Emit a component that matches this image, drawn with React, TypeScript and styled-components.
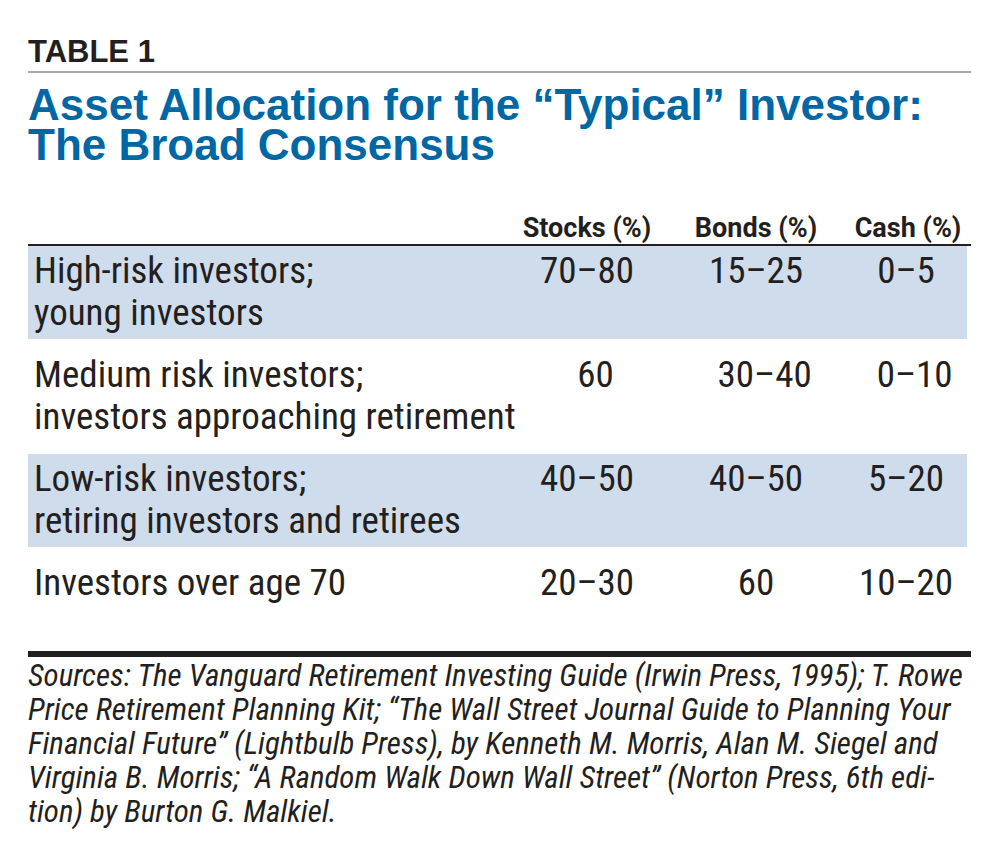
import React from 'react';
import styled, { createGlobalStyle } from 'styled-components';

const GlobalStyle = createGlobalStyle`
  html, body {
    margin: 0;
    padding: 0;
    background: #fff;
  }
  body {
    font-family: 'Liberation Sans', Arial, sans-serif;
    color: #231f20;
  }
`;

// Roboto is variable in width, so font-stretch gives the condensed cut
const condensed = (stretch: string) => `
  font-family: Roboto, 'Liberation Sans', sans-serif;
  font-stretch: ${stretch};
`;

type Row = {
  label: string[];
  stocks: string;
  bonds: string;
  cash: string;
};

const rows: Row[] = [
  { label: ['High-risk investors;', 'young investors'], stocks: '70–80', bonds: '15–25', cash: '0–5' },
  { label: ['Medium risk investors;', 'investors approaching retirement'], stocks: '60', bonds: '30–40', cash: '0–10' },
  { label: ['Low-risk investors;', 'retiring investors and retirees'], stocks: '40–50', bonds: '40–50', cash: '5–20' },
  { label: ['Investors over age 70'], stocks: '20–30', bonds: '60', cash: '10–20' },
];

const sourceLines = [
  'Sources: The Vanguard Retirement Investing Guide (Irwin Press, 1995); T. Rowe',
  'Price Retirement Planning Kit; “The Wall Street Journal Guide to Planning Your',
  'Financial Future” (Lightbulb Press), by Kenneth M. Morris, Alan M. Siegel and',
  'Virginia B. Morris; “A Random Walk Down Wall Street” (Norton Press, 6th edi-',
  'tion) by Burton G. Malkiel.',
];

const App: React.FC = () => {
  return (
    <>
      <GlobalStyle />
      <Page>
        <Kicker>TABLE 1</Kicker>
        <Title>
          Asset Allocation for the “Typical” Investor:
          <br />
          The Broad Consensus
        </Title>
        <HeadRow>
          <span />
          <HeadCell>Stocks (%)</HeadCell>
          <HeadCell>Bonds (%)</HeadCell>
          <HeadCell>Cash (%)</HeadCell>
        </HeadRow>
        {rows.map((row, i) => (
          <BodyRow key={i} $shaded={i % 2 === 0}>
            <Label>
              {row.label.map(line => (
                <span key={line}>{line}</span>
              ))}
            </Label>
            <Value>{row.stocks}</Value>
            <Value>{row.bonds}</Value>
            <Value>{row.cash}</Value>
          </BodyRow>
        ))}
        <Sources>
          {sourceLines.map(line => (
            <span key={line}>{line}</span>
          ))}
        </Sources>
      </Page>
    </>
  );
};

export default App;

const Page = styled.div`
  width: 943px;
  padding: 34px 29px 30px 28px;
`;

const Kicker = styled.div`
  font-size: 31px;
  font-weight: 700;
  line-height: 36px;
  color: #231f20;
  padding-bottom: 1px;
  border-bottom: 2px solid #a7a9ac;
`;

const Title = styled.h1`
  margin: 12px 0 0;
  font-size: 44px;
  font-weight: 700;
  line-height: 40px;
  color: #0067a5;
`;

const HeadRow = styled.div`
  display: grid;
  grid-template-columns: 1fr 160px 178px 126px;
  margin-top: 47px;
  border-bottom: 2px solid #231f20;
  ${condensed('88%')}
  font-size: 27px;
  font-weight: 700;
  line-height: 32px;
`;

const HeadCell = styled.div`
  text-align: center;
  white-space: nowrap;
`;

const BodyRow = styled.div<{ $shaded: boolean }>`
  display: grid;
  grid-template-columns: 1fr 160px 178px 122px;
  margin-right: 4px;
  padding: ${p => (p.$shaded ? '4px 0 5px' : '15px 0 16px')};
  background: ${p => (p.$shaded ? '#cfdcec' : 'transparent')};
  ${condensed('condensed')}
  font-size: 37px;
  line-height: 42px;
`;

const Label = styled.div`
  display: flex;
  flex-direction: column;
  padding-left: 6px;
  white-space: nowrap;
`;

const Value = styled.div`
  text-align: center;
  white-space: nowrap;
`;

const Sources = styled.div`
  display: flex;
  flex-direction: column;
  margin-top: 31px;
  padding-top: 2px;
  border-top: 6px solid #231f20;
  ${condensed('condensed')}
  font-style: italic;
  font-size: 31px;
  line-height: 34px;
  white-space: nowrap;
`;
